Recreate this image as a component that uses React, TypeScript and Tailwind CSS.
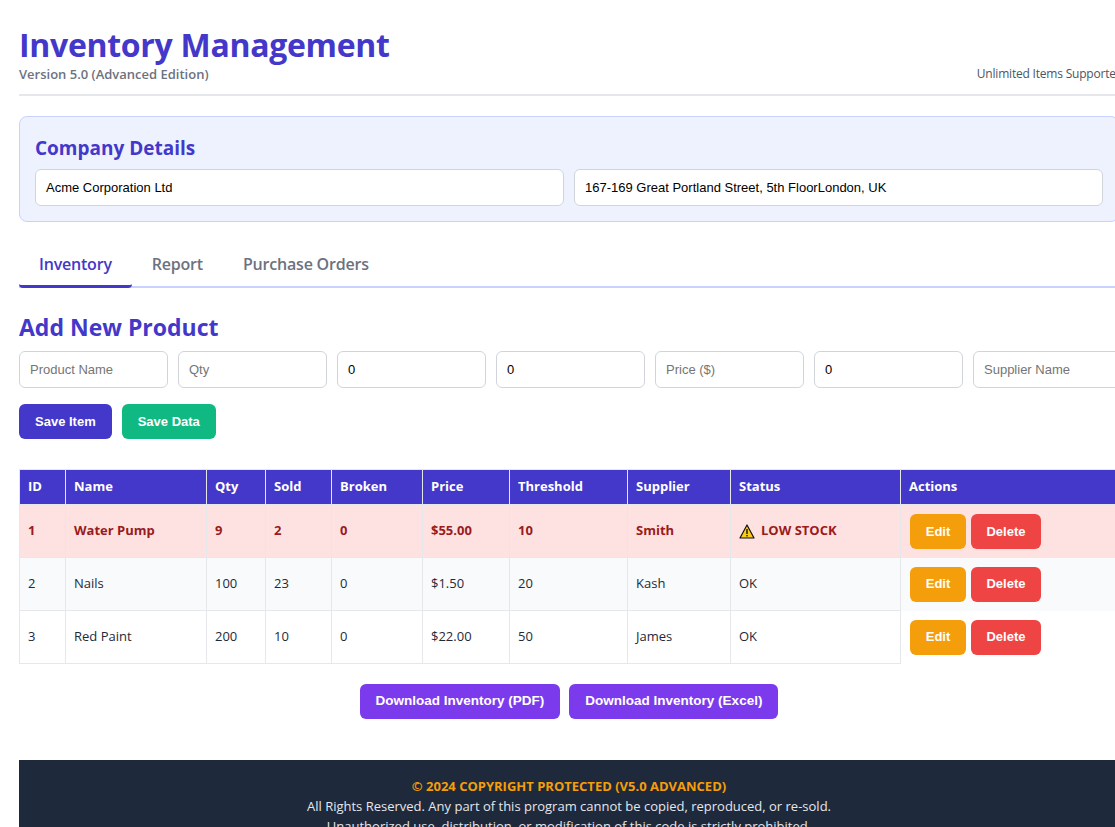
import React from "react";

const rows = [
  { id: 1, name: "Water Pump", qty: 9, sold: 2, broken: 0, price: "$55.00", th: 10, sup: "Smith", low: true },
  { id: 2, name: "Nails", qty: 100, sold: 23, broken: 0, price: "$1.50", th: 20, sup: "Kash", low: false },
  { id: 3, name: "Red Paint", qty: 200, sold: 10, broken: 0, price: "$22.00", th: 50, sup: "James", low: false },
];

const cols = [
  ["ID", "w-[46px]"], ["Name", "w-[141px]"], ["Qty", "w-[59px]"], ["Sold", "w-[66px]"], ["Broken", "w-[91px]"],
  ["Price", "w-[87px]"], ["Threshold", "w-[118px]"], ["Supplier", "w-[103px]"], ["Status", "w-[170px]"], ["Actions", ""],
];

export default function App() {
  const seg = { fontFamily: '"Open Sans", "Noto Sans", sans-serif' };
  const arial = { fontFamily: '"Liberation Sans", Arial, sans-serif' };
  return (
    <div className="w-[1115px] h-[827px] overflow-hidden bg-white" style={seg}>
      <div className="ml-[19px] w-[1100px] pt-[26px]">
        <div className="flex justify-between items-end border-b-2 border-[#e5e7eb] pb-[10px]">
          <div>
            <h1 className="text-[32px] leading-[38px] font-bold text-[#4338ca] tracking-[-0.3px]">Inventory Management</h1>
            <div className="text-[13px] leading-[20px] font-semibold text-[#6b7280]">Version 5.0 (Advanced Edition)</div>
          </div>
          <div className="text-[12px] text-[#4b5563] mr-[-4px] whitespace-nowrap pb-[1px] tracking-[-0.2px]">Unlimited Items Supported</div>
        </div>

        <div className="mt-[20px] bg-[#eef2ff] border border-[#c7d2fe] rounded-lg px-[15px] pt-[18px] pb-[15px]">
          <h2 className="text-[19px] leading-[26px] font-bold text-[#4338ca] mb-[8px]">Company Details</h2>
          <div className="flex gap-[10px]">
            <div className="flex-1 h-[37px] bg-white border border-[#d1d5db] rounded-md px-[10px] flex items-center text-[13px] text-black" style={arial}>Acme Corporation Ltd</div>
            <div className="flex-1 h-[37px] bg-white border border-[#d1d5db] rounded-md px-[10px] flex items-center text-[13px] text-black" style={arial}>167-169 Great Portland Street, 5th FloorLondon, UK</div>
          </div>
        </div>

        <div className="mt-[20px] flex border-b-2 border-[#c7d2fe] h-[46px] items-stretch">
          <div className="px-[20px] flex items-center text-[16px] font-semibold text-[#4338ca] border-b-[3px] border-[#4338ca] rounded-b-sm mb-[-2px] tracking-[-0.2px]">Inventory</div>
          <div className="px-[20px] flex items-center text-[16px] font-semibold text-[#6b7280] tracking-[-0.2px]">Report</div>
          <div className="px-[20px] flex items-center text-[16px] font-semibold text-[#6b7280] tracking-[-0.2px]">Purchase Orders</div>
        </div>

        <h2 className="mt-[24px] text-[23px] leading-[30px] font-bold text-[#4338ca]">Add New Product</h2>
        <div className="mt-[9px] flex gap-[10px] w-[1150px]">
          {["Product Name", "Qty", "0", "0", "Price ($)", "0", "Supplier Name"].map((p, i) => (
            <div key={i} className={`w-[149px] shrink-0 h-[37px] border border-[#d1d5db] rounded-md px-[10px] flex items-center text-[13px] ${p === "0" ? "text-black" : "text-[#757575]"}`} style={arial}>{p}</div>
          ))}
        </div>
        <div className="mt-[16px] flex gap-[10px]">
          <div className="h-[35px] px-[16px] rounded-md bg-[#4338ca] text-white text-[13px] font-bold flex items-center" style={arial}>Save Item</div>
          <div className="h-[35px] px-[16px] rounded-md bg-[#10b981] text-white text-[13px] font-bold flex items-center" style={arial}>Save Data</div>
        </div>

        <table className="mt-[30px] w-[1130px] border-collapse text-[13px] table-fixed">
          <thead>
            <tr className="bg-[#4338ca] text-white h-[35px]">
              {cols.map(([c, w]) => (
                <th key={c} className={`${w} text-left font-bold px-[8px] border border-[#e5e7eb]`}>{c}</th>
              ))}
            </tr>
          </thead>
          <tbody>
            {rows.map((r) => (
              <tr key={r.id} className={`h-[53px] ${r.low ? "bg-[#fee2e2] text-[#991b1b] font-bold" : r.id === 2 ? "bg-[#f8fafc] text-[#1f2937]" : "bg-white text-[#1f2937]"}`}>
                {[r.id, r.name, r.qty, r.sold, r.broken, r.price, r.th, r.sup].map((v, i) => (
                  <td key={i} className="px-[8px] border border-[#e5e7eb]">{v}</td>
                ))}
                <td className="px-[8px] border border-[#e5e7eb]">
                  {r.low ? (
                    <span className="flex items-center gap-[6px]">
                      <svg width="16" height="15" viewBox="0 0 16 15"><path d="M8 1 L15 14 H1 Z" fill="#facc15" stroke="#111" strokeWidth="1.2" strokeLinejoin="round" /><rect x="7.3" y="5" width="1.4" height="5" fill="#111" /><rect x="7.3" y="11" width="1.4" height="1.4" fill="#111" /></svg>
                      LOW STOCK
                    </span>
                  ) : "OK"}
                </td>
                <td className="px-[9px] border-l border-[#e5e7eb] bg-inherit">
                  <div className="flex gap-[5px] font-bold text-[13px] text-white" style={arial}>
                    <div className="w-[56px] h-[35px] rounded-md bg-[#f59e0b] flex items-center justify-center">Edit</div>
                    <div className="w-[70px] h-[35px] rounded-md bg-[#ef4444] flex items-center justify-center">Delete</div>
                  </div>
                </td>
              </tr>
            ))}
          </tbody>
        </table>

        <div className="mt-[20px] flex justify-center gap-[9px]">
          <div className="h-[35px] px-[16px] rounded-md bg-[#7c3aed] text-white text-[13.5px] font-bold flex items-center" style={arial}>Download Inventory (PDF)</div>
          <div className="h-[35px] px-[16px] rounded-md bg-[#7c3aed] text-white text-[13.5px] font-bold flex items-center" style={arial}>Download Inventory (Excel)</div>
        </div>

        <div className="mt-[41px] bg-[#1e293b] w-[1120px] pt-[16px] pb-[10px] text-center text-[13px] leading-[20px] relative">
          <div className="font-bold text-[#f59e0b] pr-[20px]">© 2024 COPYRIGHT PROTECTED (V5.0 ADVANCED)</div>
          <div className="text-[#e5e7eb] pr-[20px]">All Rights Reserved. Any part of this program cannot be copied, reproduced, or re-sold.</div>
          <div className="text-[#e5e7eb] pr-[20px]">Unauthorized use, distribution, or modification of this code is strictly prohibited.</div>
          <span className="absolute left-[1078px] bottom-[-4px] text-[#6b7280] text-[13px]">^</span>
        </div>
      </div>
    </div>
  );
}
